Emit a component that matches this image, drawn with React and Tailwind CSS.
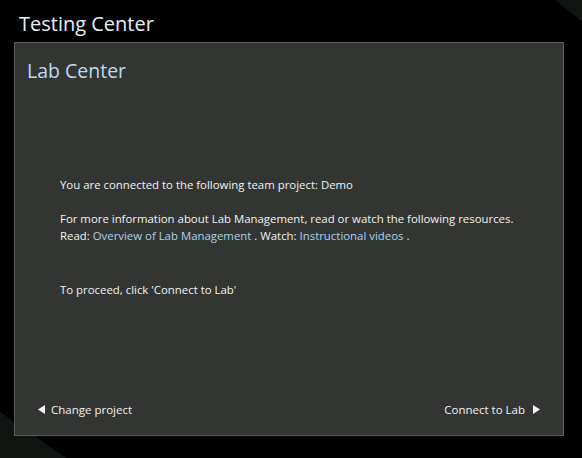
import React from "react";

export default function App() {
  return (
    <div className="relative w-[582px] h-[458px] bg-black overflow-hidden" style={{ fontFamily: '"Open Sans", "Noto Sans", sans-serif' }}>
      <svg className="absolute inset-0" width="582" height="458" viewBox="0 0 582 458">
        <polygon points="555,0 582,0 582,22" fill="#101411" />
        <polygon points="0,412 66,458 0,458" fill="#101411" />
      </svg>
      <div className="relative flex flex-col">
        <div className="h-[42px] pl-[19px] pt-[11px] text-[20px] leading-[26px] text-[#e6f0f7]">Testing Center</div>
        <div className="ml-[14px] w-[550px] h-[394px] border border-[#5c5e5b] bg-[#333532] flex flex-col">
          <div className="pl-[12px] pt-[16px] text-[19.5px] leading-[24px] text-[#b8dcf6]">Lab Center</div>
          <div className="pl-[45px] pt-[93px] text-[11.4px] leading-[17px] text-[#f2f2f2]">
            <div>You are connected to the following team project: Demo</div>
            <div className="mt-[17px]">For more information about Lab Management, read or watch the following resources.</div>
            <div>
              Read: <span className="text-[#a9d3f0]">Overview of Lab Management</span> . Watch: <span className="text-[#a9d3f0]">Instructional videos</span> .
            </div>
            <div className="mt-[37px]">To proceed, click 'Connect to Lab'</div>
          </div>
          <div className="mt-auto mb-[17px] px-[23px] flex justify-between items-center text-[11.5px] leading-[17px] text-[#f2f2f2]">
            <div className="flex items-center gap-[6px]">
              <svg width="7" height="9" viewBox="0 0 7 9"><polygon points="7,0 7,9 0,4.5" fill="#f2f2f2" /></svg>
              <span>Change project</span>
            </div>
            <div className="flex items-center gap-[8px]">
              <span>Connect to Lab</span>
              <svg width="7" height="9" viewBox="0 0 7 9"><polygon points="0,0 0,9 7,4.5" fill="#f2f2f2" /></svg>
            </div>
          </div>
        </div>
      </div>
    </div>
  );
}
